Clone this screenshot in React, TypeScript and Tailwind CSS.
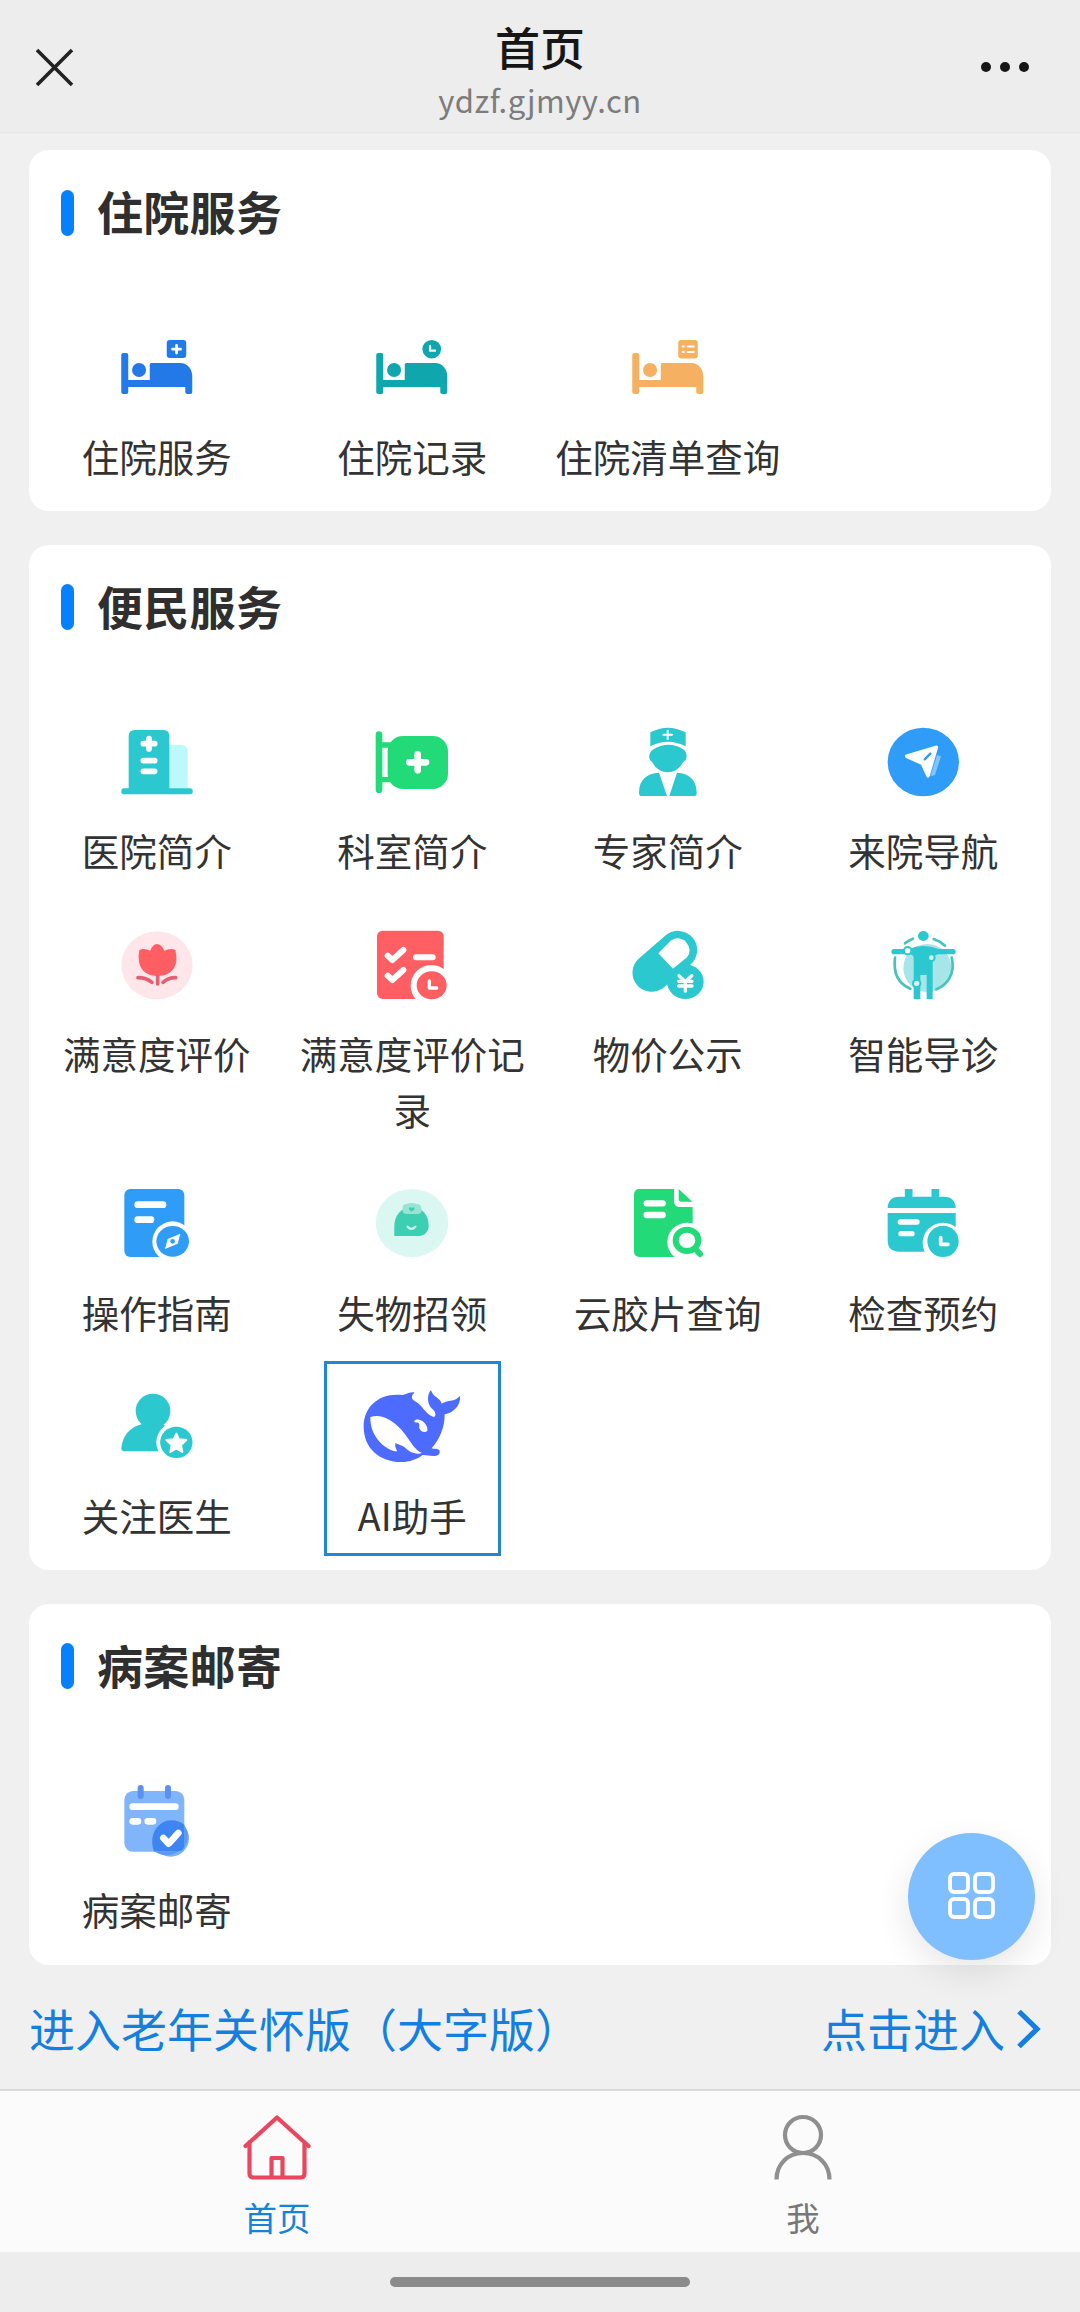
import type { ReactNode } from "react";

const TEAL = "#2cc8d0";
const BLUE = "#2f9cf8";
const GREEN = "#22da78";
const RED = "#ff5f62";

function Icon({ x, y, w = 324, h = 216, children }: { x: number; y: number; w?: number; h?: number; children: ReactNode }) {
  return (
    <svg className="h-[72px] w-[108px] shrink-0" viewBox={`${x} ${y} ${w} ${h}`} fill="none" strokeLinecap="round" strokeLinejoin="round">
      {children}
    </svg>
  );
}

function Bed({ color, children }: { color: string; children: ReactNode }) {
  return (
    <Icon x={102.75} y={331} w={108} h={72}>
      <path
        fill={color}
        d="M121 355a2 2 0 0 1 2-2h3a2 2 0 0 1 2 2v25h21.5v-15.500a1.500 1.500 0 0 1 1.500-1.500h29c7 0 12 6 12 13v16a2 2 0 0 1-2 2h-3a2 2 0 0 1-2-2v-5h-57v5a2 2 0 0 1-2 2h-3a2 2 0 0 1-2-2z"
      />
      <circle cx="138.800" cy="370" r="7" fill={color} />
      {children}
    </Icon>
  );
}

const BedPlus = () => (
  <Bed color="#2479e8">
    <rect x="166.500" y="340" width="19.500" height="18" rx="3" fill="#2479e8" />
    <path d="M176.300 345.500v7.500M172.300 349.200h8" stroke="#fff" strokeWidth="2.800" />
  </Bed>
);

const BedClock = () => (
  <Bed color="#10a6ae">
    <circle cx="176.500" cy="349.200" r="9.300" fill="#10a6ae" />
    <path d="M174.800 346v4.700h5" stroke="#fff" strokeWidth="2.200" />
  </Bed>
);

const BedList = () => (
  <Bed color="#f6b061">
    <rect x="167" y="340" width="19.500" height="18.500" rx="3" fill="#f6b061" />
    <path d="M171.500 346.500h1M171.500 352h1M176.500 346.500h6M176.500 352h6" stroke="#fff" strokeWidth="2.200" />
  </Bed>
);

const Hospital = () => (
  <Icon x={128} y={78}>
    <path fill="#bdf8fa" d="M320 135h42q20 0 20 20v115h-62z" />
    <path fill={TEAL} d="M205 108q0-18 18-18h86q18 0 18 18v162H205z" />
    <rect x="183" y="265" width="214" height="18" rx="8" fill={TEAL} />
    <path stroke="#fff" strokeWidth="17" d="M266 116v31M249 131h34M249 182h34M249 214h34" />
  </Icon>
);

const Department = () => (
  <Icon x={895} y={78}>
    <rect x="948" y="94" width="20" height="185" rx="10" fill={GREEN} />
    <path stroke={GREEN} strokeWidth="16" strokeLinecap="butt" d="M960 135h50M960 239h50" />
    <rect x="984" y="108" width="181" height="159" rx="46" fill={GREEN} />
    <path stroke="#fff" strokeWidth="20" d="M1074 163v48M1049 187h50" />
  </Icon>
);

const Expert = () => (
  <Icon x={161} y={78}>
    <path
      fill={TEAL}
      d="M270 97q52-28 106 0v42q-54-27-106 0zM277 149q48-29 94 0q10 10 7 26c-2 8-8 10-11 13c-20 38-70 38-90 0c-4-4-8-6-10-13q-2-16 10-26zM296 218l24 70h-76q-8 0-8-10c0-38 23-59 60-60zM350 218l-23 70h74q8 0 8-10c0-38-23-59-59-60z"
    />
    <path stroke="#fff" strokeWidth="6" d="M322 92v25M309 104h26" />
  </Icon>
);

const Navigate = () => (
  <Icon x={928} y={78}>
    <ellipse cx="1091" cy="186" rx="107" ry="103" fill={BLUE} />
    <path fill="#82c4fc" d="M1132 165l12 4l-18 56l-14 4z" />
    <path fill="#fff" d="M1037 164L1127 137q10-2 8 7L1110 229q-5 9-10 0L1084 194L1039 174q-5-5-2-10z" />
    <path stroke={BLUE} strokeWidth="7" d="M1095 178L1112 161" />
  </Icon>
);

const Tulip = () => (
  <Icon x={128} y={87}>
    <ellipse cx="290" cy="196" rx="107" ry="102" fill="#ffe6ea" />
    <path fill={RED} d="M237 150q14-7 33 2q7-20 20-20t22 20q18-9 33-2q5 20 3 35c-5 28-28 43-56 43s-52-15-56-43q-3-16 1-35z" />
    <path stroke="#e55f72" strokeWidth="11" d="M292 228v24M233 233q24 0 42 14M346 233q-22 0-38 14" />
  </Icon>
);

const Survey = () => (
  <Icon x={895} y={87}>
    <rect x="952" y="92" width="200" height="205" rx="17" fill={RED} />
    <path stroke="#fff" strokeWidth="18" d="M984 167l14 13l33-30M984 227l14 13l33-30M1069 172h50" />
    <circle cx="1115" cy="257" r="62" fill="#fff" />
    <ellipse cx="1116" cy="256" rx="45" ry="42" fill={RED} />
    <path stroke="#fff" strokeWidth="10" d="M1109 243v21h22" />
  </Icon>
);

const Pill = () => (
  <Icon x={161} y={87}>
    <path stroke={TEAL} strokeWidth="115" d="M274 218L353 150" />
    <path fill="#fff" d="M294 160L331 122q24-16 46 4q20 24 3 46L338 206z" />
    <ellipse cx="375" cy="245" rx="55" ry="52" fill={TEAL} />
    <path stroke="#fff" strokeWidth="10" d="M356 227l19 18l19-18M375 245v28M355 244h40M355 258h40" />
  </Icon>
);

const BodyScan = () => (
  <Icon x={928} y={87}>
    <circle cx="1103" cy="204" r="72" fill="#a6e5e8" />
    <path stroke="#45c4bd" strokeWidth="8" d="M1036 130q12-10 24-14M1122 117q20 7 34 20M1006 173c-6 50 14 80 46 93M1176 173c12 50-14 82-46 95" />
    <ellipse cx="1091" cy="108" rx="16" ry="15" fill={TEAL} />
    <path
      fill={TEAL}
      d="M1003 147h45q20-9 43-9t46 9h43a8 8 0 0 1 0 16h-45q-12 2-16 10V297h-18V225h-19v72h-20V170q-3-5-10-7h-49a8 8 0 0 1 0-16z"
    />
    <g fill="#d8f6f6" stroke={TEAL} strokeWidth="6">
      <circle cx="1044" cy="152" r="11" fill="#fff" />
      <circle cx="1115" cy="173" r="10" />
      <circle cx="1071" cy="250" r="11" />
    </g>
  </Icon>
);

const Guide = () => (
  <Icon x={128} y={78}>
    <rect x="192" y="84" width="180" height="204" rx="18" fill={BLUE} />
    <path stroke="#fff" strokeWidth="20" d="M232 131h76M232 176h40" />
    <circle cx="337" cy="242" r="61" fill="#fff" />
    <ellipse cx="337" cy="241" rx="49" ry="46" fill={BLUE} />
    <path fill="#fff" d="M360 218l-8 30l-38 16l8-30z" />
    <circle cx="337" cy="241" r="7" fill={BLUE} />
  </Icon>
);

const Lost = () => (
  <Icon x={895} y={78}>
    <ellipse cx="1057" cy="186" rx="109" ry="102" fill="#daf7f1" />
    <path fill="#3dcfb2" d="M1004 225v-30c0-32 22-56 52-56s51 22 51 56c0 18-14 30-30 30z" />
    <path fill="#97e4d3" d="M1029 143q-2-14 12-14q15-6 29 0q15 0 15 12q4 18-12 18h-34q-13-3-10-16z" />
    <path fill="#3dcfb2" d="M1047 141q5-5 9 0q5-5 9 0q0 6-9 11q-9-5-9-11z" />
    <path stroke="#c9f5ec" strokeWidth="7" d="M1044 197q11 13 23 0" />
  </Icon>
);

const Film = () => (
  <Icon x={161} y={78}>
    <path fill={GREEN} d="M221 101q0-17 17-17h103v36q0 18 18 18h38v134q0 16-16 16H238q-17 0-17-17zM355 84l41 38h-34q-7 0-7-7z" />
    <path stroke="#fff" strokeWidth="19" d="M259 127h48M259 162h48" />
    <ellipse cx="381" cy="243" rx="60" ry="58" fill="#fff" />
    <ellipse cx="380" cy="238" rx="34" ry="32" stroke={GREEN} strokeWidth="18" />
    <path stroke={GREEN} strokeWidth="18" d="M407 266l12 13" />
  </Icon>
);

const Calendar = () => (
  <Icon x={928} y={78}>
    <path stroke={TEAL} strokeWidth="23" strokeLinecap="butt" d="M1047 84v38M1127 84v38" />
    <path fill={TEAL} d="M984 141c0-20 12-34 34-34h136c22 0 34 14 34 34zM984 156h204v116H1018q-34 0-34-34z" />
    <path stroke="#fff" strokeWidth="16" d="M1022 183h50M1024 218h33" />
    <circle cx="1150" cy="246" r="61" fill="#fff" />
    <circle cx="1150" cy="241" r="47" fill={TEAL} />
    <path stroke="#fff" strokeWidth="11" d="M1143 230v20h22" />
  </Icon>
);

const Follow = () => (
  <Icon x={128} y={117}>
    <circle cx="278" cy="180" r="52" fill={TEAL} />
    <path fill={TEAL} d="M183 292c4-50 40-76 95-77c30 0 45 12 60 30l-43 56H192q-9 0-9-9z" />
    <circle cx="348" cy="274" r="60" fill="#fff" />
    <ellipse cx="348" cy="274" rx="48.500" ry="47" fill={TEAL} />
    <path fill="#fff" stroke="#fff" strokeWidth="6" d="M348 248l8 17l22 2l-16 15l4 21l-18-11l-18 11l4-21l-16-15l22-2z" />
  </Icon>
);

const Whale = () => (
  <Icon x={895} y={117}>
    <path
      fill="#4d6bfe"
      d="M1064 124C1050 123 1040 130 1029 132C960 124 912 165 912 227C912 290 958 333 1025 333C1050 333 1072 325 1089 312C1105 312 1115 317 1130 314C1141 312 1142 300 1138 296C1130 292 1124 295 1116 292C1140 265 1155 230 1155 190C1182 186 1204 162 1201 135C1190 147 1180 148 1168 150C1158 152 1150 156 1146 158C1143 145 1130 140 1122 132C1117 127 1116 120 1113 118C1103 132 1102 152 1112 167C1118 175 1126 178 1127 188C1128 196 1124 200 1117 196C1098 188 1088 165 1071 154C1060 148 1055 143 1057 135C1059 130 1063 128 1064 124Z"
    />
    <path fill="#fff" d="M932 198C965 187 1000 209 1024 235C1048 261 1062 298 1087 306C1070 312 1050 303 1040 293C1028 282 1018 282 1008 276C1004 286 1010 294 1013 301C985 302 930 262 932 198Z" />
    <path fill="#fff" d="M1063 211C1067 203 1079 204 1088 210C1099 218 1105 230 1103 240C1096 245 1084 243 1080 234C1076 226 1083 219 1075 215C1070 213 1067 217 1063 211Z" />
  </Icon>
);

const Mail = () => (
  <Icon x={128} y={132}>
    <rect x="192" y="150" width="180" height="182" rx="26" fill="#80b5fb" />
    <path stroke="#5b91f3" strokeWidth="18" d="M241 141v24M323 141v24" />
    <path stroke="#fff" strokeWidth="20" d="M217 197h128M217 241h16M262 241h16" />
    <circle cx="331" cy="292" r="55" fill="#78b1fb" />
    <path fill="#3d85f2" d="M281 331c-14-40 0-78 38-92c20-4 38 0 53 12v60q0 20-22 20z" />
    <path fill="#5b99f5" d="M372 251q22 38-4 73q4-5 4-20zM281 331h74q-36 24-74 0z" />
    <path stroke="#fff" strokeWidth="20" d="M309 291l16 17l29-32" />
  </Icon>
);

type Item = { label: string; icon: ReactNode; boxed?: boolean };

const inpatient: Item[] = [
  { label: "住院服务", icon: <BedPlus /> },
  { label: "住院记录", icon: <BedClock /> },
  { label: "住院清单查询", icon: <BedList /> },
];

const convenience: Item[] = [
  { label: "医院简介", icon: <Hospital /> },
  { label: "科室简介", icon: <Department /> },
  { label: "专家简介", icon: <Expert /> },
  { label: "来院导航", icon: <Navigate /> },
  { label: "满意度评价", icon: <Tulip /> },
  { label: "满意度评价记录", icon: <Survey /> },
  { label: "物价公示", icon: <Pill /> },
  { label: "智能导诊", icon: <BodyScan /> },
  { label: "操作指南", icon: <Guide /> },
  { label: "失物招领", icon: <Lost /> },
  { label: "云胶片查询", icon: <Film /> },
  { label: "检查预约", icon: <Calendar /> },
  { label: "关注医生", icon: <Follow /> },
  { label: "AI助手", icon: <Whale />, boxed: true },
];

const records: Item[] = [{ label: "病案邮寄", icon: <Mail /> }];

function Section({ title, items }: { title: string; items: Item[] }) {
  return (
    <section className="rounded-[20px] bg-white pb-px">
      <div className="flex h-[157px] items-start gap-6 pt-9 pl-8">
        <span className="mt-[3.500px] h-[46px] w-[13px] rounded-full bg-[#0681fb]" />
        <h2 className="-ml-px text-[46px] leading-[48px] font-bold tracking-[0.300px] text-[#2f2f2f]">{title}</h2>
      </div>
      <div className="grid grid-cols-4">
        {items.map((item) => (
          <div key={item.label} className="relative flex flex-col items-center px-[14px] pt-6 pb-[27px]">
            {item.icon}
            <span className="mt-[24.500px] text-center text-[37.500px] leading-[55.500px] text-[#333]">{item.label}</span>
            {item.boxed && <span className="absolute inset-x-[39px] top-[-5px] h-[195px] border-[3px] border-[#2385d3]" />}
          </div>
        ))}
      </div>
    </section>
  );
}

export default function App() {
  return (
    <div className="relative flex h-[2312px] w-[1080px] flex-col overflow-hidden bg-[#f0f0f0] font-['Noto_Sans_CJK_SC',sans-serif]">
      <header className="flex h-[133px] items-center justify-between border-b border-[#e8e8e8] bg-[#ededed] pt-[2px] pr-[51px] pl-[35px]">
        <svg className="size-[39px]" viewBox="0 0 39 39" fill="none" stroke="#222" strokeWidth="3.600">
          <path d="M2 2L37 37M37 2L2 37" />
        </svg>
        <div className="absolute inset-x-0 top-0 flex flex-col items-center pt-[20px]">
          <h1 className="text-[45px] leading-[54px] font-medium text-[#161616]">首页</h1>
          <p className="mt-[2px] text-[31px] leading-[48px] tracking-[0.500px] text-[#7c7c7c]">ydzf.gjmyy.cn</p>
        </div>
        <div className="flex gap-[9px]">
          <i className="size-[10px] rounded-full bg-[#161616]" />
          <i className="size-[10px] rounded-full bg-[#161616]" />
          <i className="size-[10px] rounded-full bg-[#161616]" />
        </div>
      </header>

      <main className="flex flex-1 flex-col gap-[33.500px] px-[29px] pt-[17px]">
        <Section title="住院服务" items={inpatient} />
        <Section title="便民服务" items={convenience} />
        <Section title="病案邮寄" items={records} />
        <div className="-mt-px flex items-center justify-between pr-[10px] text-[46px] leading-[60px] text-[#137fe0]">
          <span>进入老年关怀版（大字版）</span>
          <span className="flex items-center gap-[11px]">
            点击进入
            <svg className="mt-[3px] h-[40px] w-[25px]" viewBox="0 0 25 40" fill="none" stroke="#137fe0" strokeWidth="5.200">
              <path d="M3 2.500L21 20L3 37.500" />
            </svg>
          </span>
        </div>
      </main>

      <nav className="flex h-[163px] border-t-2 border-[#dadada] bg-[#fbfbfb] px-[13px] text-[33.500px] leading-[44px]">
        <div className="flex flex-1 flex-col items-center pt-[21px] pl-px text-[#1583d8]">
          <svg className="h-[70px] w-[72px]" viewBox="0 0 72 70" fill="none" stroke="#e8475f" strokeWidth="4.200" strokeLinejoin="round" strokeLinecap="round">
            <path d="M4.500 34L36 5.500L67.500 34M8.500 30v31.500q0 4 4 4h47q4 0 4-4V30M30.500 65V46h11v19" />
          </svg>
          <span className="mt-[13px]">首页</span>
        </div>
        <div className="flex flex-1 flex-col items-center pt-[21px] pr-px text-[#777]">
          <svg className="h-[70px] w-[72px]" viewBox="0 0 72 70" fill="none" stroke="#8f8f8f" strokeWidth="4.200">
            <circle cx="36" cy="23" r="18" />
            <path d="M9.500 67.500C9.500 52 21 41 36 41S62.500 52 62.500 67.500" />
          </svg>
          <span className="mt-[13px]">我</span>
        </div>
      </nav>
      <footer className="flex h-[60px] justify-center bg-[#ededed] pt-[25px]">
        <span className="h-[10px] w-[300px] rounded-full bg-[#8b8b8b]" />
      </footer>

      <button className="absolute top-[1833px] left-[908px] flex size-[127px] items-center justify-center rounded-full bg-[#80bfff] shadow-[0_12px_36px_rgba(0,0,0,0.1)]">
        <svg className="mb-[2px] size-[47px]" viewBox="0 0 47 47" fill="none" stroke="#fff" strokeWidth="3.800">
          <rect x="2" y="2" width="18" height="18" rx="4" />
          <rect x="27" y="2" width="18" height="18" rx="4" />
          <rect x="2" y="27" width="18" height="18" rx="4" />
          <rect x="27" y="27" width="18" height="18" rx="4" />
        </svg>
      </button>
    </div>
  );
}
